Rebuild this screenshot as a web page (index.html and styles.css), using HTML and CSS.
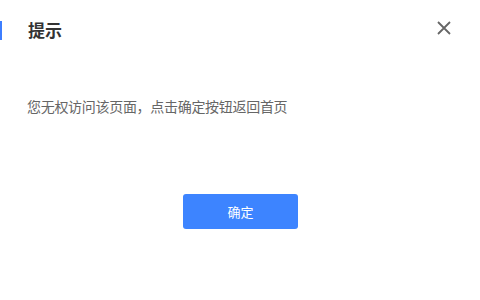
FILE: index.html
```html
<!DOCTYPE html>
<html lang="zh-CN">
<head>
<meta charset="utf-8">
<link rel="stylesheet" href="styles.css">
</head>
<body>
<div class="dialog">
  <div class="header">
    <span class="bar"></span>
    <h2 class="title">提示</h2>
    <button class="close" aria-label="关闭">
      <svg width="14" height="14" viewBox="0 0 14 14"><path d="M1 1L13 13M13 1L1 13" stroke="#666" stroke-width="1.8" fill="none"/></svg>
    </button>
  </div>
  <p class="message">您无权访问该页面，点击确定按钮返回首页</p>
  <div class="footer">
    <button class="confirm">确定</button>
  </div>
</div>
</body>
</html>
```
FILE: styles.css
```css
html, body {
  margin: 0;
  padding: 0;
  background: #fff;
}
body {
  width: 480px;
  height: 300px;
  font-family: "Noto Sans CJK SC", "Noto Sans", sans-serif;
}
.dialog {
  display: flex;
  flex-direction: column;
}
.header {
  display: flex;
  align-items: center;
  height: 20px;
  margin-top: 20px;
}
.bar {
  width: 2px;
  height: 19px;
  background: #3d7eff;
}
.title {
  margin: 0 0 0 26px;
  font-size: 17px;
  font-weight: bold;
  color: #333;
  line-height: 20px;
  flex: 1;
}
.close {
  border: 0;
  background: none;
  padding: 0;
  margin-right: 29px;
  width: 14px;
  height: 14px;
  display: flex;
  margin-top: -4px;
}
.message {
  margin: 59px 0 0 27px;
  font-size: 14px;
  line-height: 14px;
  color: #666;
  letter-spacing: -0.3px;
}
.footer {
  display: flex;
  justify-content: center;
  margin-top: 81px;
  padding-left: 1px;
}
.confirm {
  width: 115px;
  height: 35px;
  border: 0;
  border-radius: 3px;
  background: #3d84ff;
  color: #fff;
  font-family: "Noto Sans CJK SC", sans-serif;
  font-size: 13px;
  padding: 0;
}
```
